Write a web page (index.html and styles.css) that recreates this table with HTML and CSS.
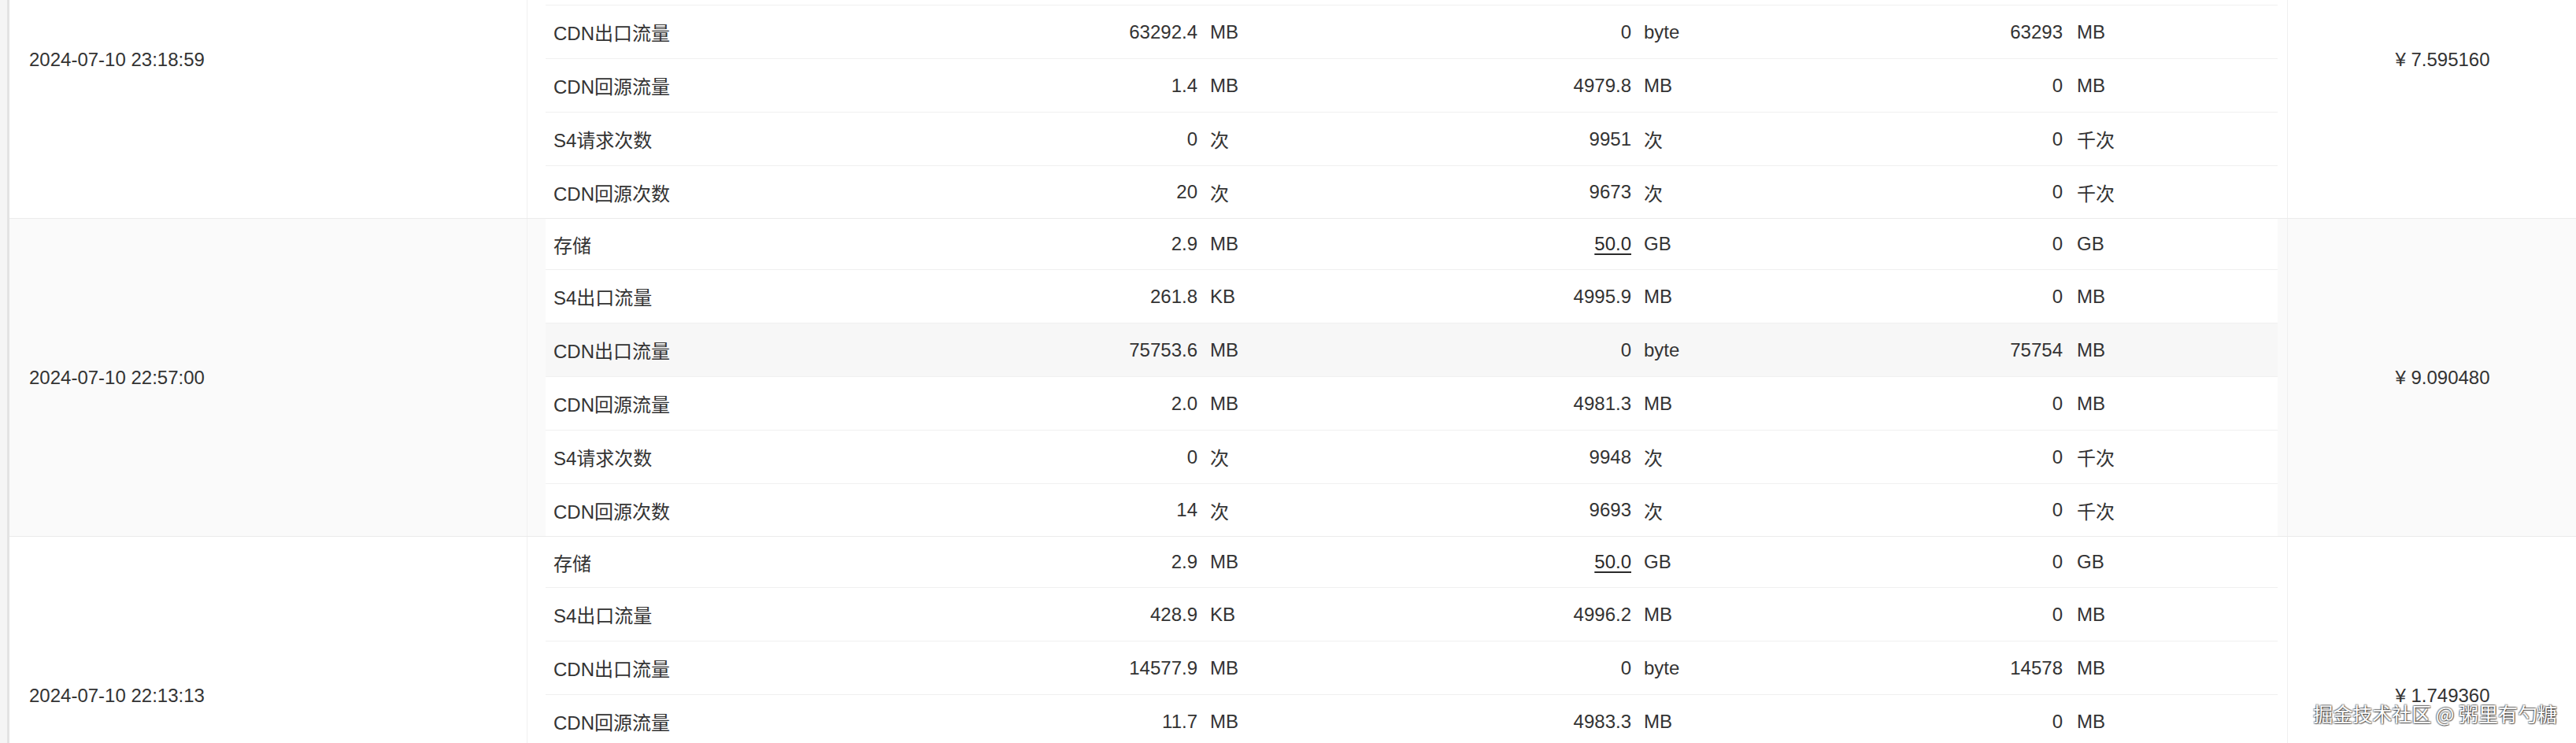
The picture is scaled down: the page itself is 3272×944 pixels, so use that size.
FILE: index.html
```html
<!DOCTYPE html>
<html lang="zh-CN">
<head>
<meta charset="utf-8">
<title>费用明细</title>
<link rel="stylesheet" href="styles.css">
</head>
<body>
<div class="viewport">
  <div class="sheet">
    <div class="group">
      <div class="date">2024-07-10 23:18:59</div>
      <div class="items">
        <div class="item"><span class="label">存储</span><span class="num">2.9</span><span class="unit">MB</span><span class="num"><u class="quota">50.0</u></span><span class="unit">GB</span><span class="num">0</span><span class="unit">GB</span></div>
        <div class="item"><span class="label">S4出口流量</span><span class="num">240.6</span><span class="unit">KB</span><span class="num">4995.7</span><span class="unit">MB</span><span class="num">0</span><span class="unit">MB</span></div>
        <div class="item"><span class="label">CDN出口流量</span><span class="num">63292.4</span><span class="unit">MB</span><span class="num">0</span><span class="unit">byte</span><span class="num">63293</span><span class="unit">MB</span></div>
        <div class="item"><span class="label">CDN回源流量</span><span class="num">1.4</span><span class="unit">MB</span><span class="num">4979.8</span><span class="unit">MB</span><span class="num">0</span><span class="unit">MB</span></div>
        <div class="item"><span class="label">S4请求次数</span><span class="num">0</span><span class="unit">次</span><span class="num">9951</span><span class="unit">次</span><span class="num">0</span><span class="unit">千次</span></div>
        <div class="item"><span class="label">CDN回源次数</span><span class="num">20</span><span class="unit">次</span><span class="num">9673</span><span class="unit">次</span><span class="num">0</span><span class="unit">千次</span></div>
      </div>
      <div class="price">¥ 7.595160</div>
    </div>

    <div class="group group-alt">
      <div class="date">2024-07-10 22:57:00</div>
      <div class="items">
        <div class="item"><span class="label">存储</span><span class="num">2.9</span><span class="unit">MB</span><span class="num"><u class="quota">50.0</u></span><span class="unit">GB</span><span class="num">0</span><span class="unit">GB</span></div>
        <div class="item"><span class="label">S4出口流量</span><span class="num">261.8</span><span class="unit">KB</span><span class="num">4995.9</span><span class="unit">MB</span><span class="num">0</span><span class="unit">MB</span></div>
        <div class="item item-hover"><span class="label">CDN出口流量</span><span class="num">75753.6</span><span class="unit">MB</span><span class="num">0</span><span class="unit">byte</span><span class="num">75754</span><span class="unit">MB</span></div>
        <div class="item"><span class="label">CDN回源流量</span><span class="num">2.0</span><span class="unit">MB</span><span class="num">4981.3</span><span class="unit">MB</span><span class="num">0</span><span class="unit">MB</span></div>
        <div class="item"><span class="label">S4请求次数</span><span class="num">0</span><span class="unit">次</span><span class="num">9948</span><span class="unit">次</span><span class="num">0</span><span class="unit">千次</span></div>
        <div class="item"><span class="label">CDN回源次数</span><span class="num">14</span><span class="unit">次</span><span class="num">9693</span><span class="unit">次</span><span class="num">0</span><span class="unit">千次</span></div>
      </div>
      <div class="price">¥ 9.090480</div>
    </div>

    <div class="group">
      <div class="date">2024-07-10 22:13:13</div>
      <div class="items">
        <div class="item"><span class="label">存储</span><span class="num">2.9</span><span class="unit">MB</span><span class="num"><u class="quota">50.0</u></span><span class="unit">GB</span><span class="num">0</span><span class="unit">GB</span></div>
        <div class="item"><span class="label">S4出口流量</span><span class="num">428.9</span><span class="unit">KB</span><span class="num">4996.2</span><span class="unit">MB</span><span class="num">0</span><span class="unit">MB</span></div>
        <div class="item"><span class="label">CDN出口流量</span><span class="num">14577.9</span><span class="unit">MB</span><span class="num">0</span><span class="unit">byte</span><span class="num">14578</span><span class="unit">MB</span></div>
        <div class="item"><span class="label">CDN回源流量</span><span class="num">11.7</span><span class="unit">MB</span><span class="num">4983.3</span><span class="unit">MB</span><span class="num">0</span><span class="unit">MB</span></div>
        <div class="item"><span class="label">S4请求次数</span><span class="num">0</span><span class="unit">次</span><span class="num">9950</span><span class="unit">次</span><span class="num">0</span><span class="unit">千次</span></div>
        <div class="item"><span class="label">CDN回源次数</span><span class="num">9</span><span class="unit">次</span><span class="num">9700</span><span class="unit">次</span><span class="num">0</span><span class="unit">千次</span></div>
      </div>
      <div class="price">¥ 1.749360</div>
    </div>
  </div>
  <div class="watermark">掘金技术社区 @ 粥里有勺糖</div>
</div>
</body>
</html>
```

FILE: styles.css
```css
* {
  box-sizing: border-box;
}

html, body {
  margin: 0;
  padding: 0;
  background: #f5f5f5;
}

body {
  font-family: "Liberation Sans", "Noto Sans CJK SC", sans-serif;
  font-size: 24px;
  color: #333333;
}

.viewport {
  position: relative;
  width: 3272px;
  height: 944px;
  overflow: hidden;
  padding-left: 9px;
}

.sheet {
  width: 3290px;
  margin-top: -126px;
  border-left: 3px solid #e3e3e3;
  background: #ffffff;
}

.group {
  display: flex;
  background: #ffffff;
  border-bottom: 1px solid #ebebeb;
}

.group-alt {
  background: #fafafa;
}

.date {
  flex: 0 0 658px;
  display: flex;
  align-items: center;
  padding-left: 25px;
  border-right: 1px solid #f0f0f0;
  white-space: nowrap;
}

.items {
  flex: 0 0 2236px;
  display: flex;
  flex-direction: column;
  padding: 0 12px 0 23px;
  border-right: 1px solid #f0f0f0;
}

.price {
  flex: 0 0 393px;
  display: flex;
  align-items: center;
  justify-content: center;
  white-space: nowrap;
}

.item {
  display: grid;
  grid-template-columns: 407px 429px 121px 430px 120px 429px 264px;
  align-items: center;
  height: 68px;
  background: #ffffff;
  border-bottom: 1px solid #f0f0f0;
  white-space: nowrap;
}

.item:first-child {
  height: 65px;
}

.item:last-child {
  height: 66px;
  border-bottom: none;
}

.item-hover {
  background: #f7f7f7;
}

.label {
  padding-left: 10px;
}

.num {
  text-align: right;
  padding-right: 8px;
}

.unit {
  padding-left: 8px;
}

.num:nth-child(6) {
  padding-right: 9px;
}

.unit:nth-child(7) {
  padding-left: 9px;
}

.quota {
  text-decoration: underline;
  text-decoration-thickness: 2px;
  text-underline-offset: 4px;
  color: #2a2a2a;
}

.watermark {
  position: absolute;
  right: 24px;
  bottom: 24px;
  font-family: "Noto Sans CJK SC", sans-serif;
  font-size: 25px;
  line-height: 28px;
  color: #ffffff;
  white-space: nowrap;
  text-shadow: 1px 1px 1px rgba(0, 0, 0, 0.55), -1px -1px 1px rgba(0, 0, 0, 0.35), 1px -1px 1px rgba(0, 0, 0, 0.35), -1px 1px 1px rgba(0, 0, 0, 0.35);
}
```
